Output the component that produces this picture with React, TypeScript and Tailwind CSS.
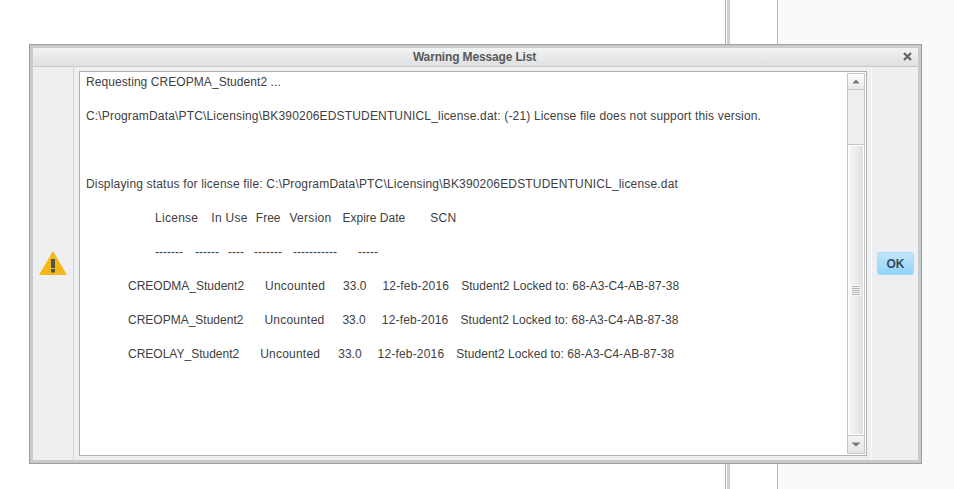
const font = { fontFamily: '"Liberation Sans", Arial, sans-serif' };

type Cell = [string, number, string?];

function Row({ cells }: { cells: Cell[] }) {
  return (
    <div className="flex h-[34px] whitespace-pre">
      {cells.map(([t, x, c], i) => (
        <span key={i} className={"shrink-0 " + (c ?? "")} style={{ marginLeft: x }}>
          {t}
        </span>
      ))}
    </div>
  );
}

function Warning() {
  return (
    <svg width="28" height="24" viewBox="0 0 28 24">
      <path d="M14 0 L28 24 L0 24 Z" fill="#f4b916" />
      <rect x="12" y="8" width="4" height="9" fill="#555048" />
      <rect x="12" y="18" width="4" height="3.5" fill="#555048" />
    </svg>
  );
}

function Scrollbar() {
  return (
    <div className="w-[18px] shrink-0 mr-px my-px flex flex-col border border-[#c4c6c8] bg-[#eceef0]">
      <div className="h-[16px] shrink-0 flex items-center justify-center border-b border-[#c4c6c8] bg-gradient-to-b from-[#fbfbfb] to-[#e8e9ea]">
        <svg width="8" height="5" viewBox="0 0 8 5"><path d="M4 0.5 L7.5 4.5 L0.5 4.5 Z" fill="#777" /></svg>
      </div>
      <div className="h-[54px] shrink-0" />
      <div className="flex-1 border-y border-[#c4c6c8] border-x-0 p-px bg-white">
        <div className="h-full flex items-center justify-center bg-gradient-to-r from-[#f8f8f8] to-[#e0e0e1]">
          <div className="flex flex-col gap-px w-[10px] px-px py-px bg-[#f4f4f4]">
            {[0, 1, 2, 3, 4].map((i) => (
              <div key={i} className="h-px bg-[#b4b6b8]" />
            ))}
          </div>
        </div>
      </div>
      <div className="h-[17px] shrink-0 flex items-center justify-center bg-gradient-to-b from-[#f4f4f5] to-[#e4e5e6]">
        <svg width="10" height="5" viewBox="0 0 10 5"><path d="M0.5 0.5 L9.5 0.5 L5 4.5 Z" fill="#777" /></svg>
      </div>
    </div>
  );
}

const HEAD: Cell[] = [
  ["License", 69, "tracking-[0.28px]"],
  ["In Use", 13, "tracking-[0.3px]"],
  ["Free", 8],
  ["Version", 9, "tracking-[0.28px]"],
  ["Expire Date", 11],
  ["SCN", 25, "tracking-[0.3px]"],
];

const DASH: Cell[] = [
  ["-------", 69],
  ["------", 12],
  ["----", 9],
  ["-------", 10],
  ["-----------", 11],
  ["-----", 21],
];

function lic(name: string): Cell[] {
  return [
    [name, 42],
    ["Uncounted", 21, "tracking-[0.22px]"],
    ["33.0", 18],
    ["12-feb-2016", 16, "tracking-[0.18px]"],
    ["Student2 Locked to: 68-A3-C4-AB-87-38", 12, "tracking-[0.05px]"],
  ];
}

export default function App() {
  return (
    <div className="relative w-[954px] h-[489px] overflow-hidden bg-white" style={font}>
      <div className="flex h-full">
        <div className="w-[725px] shrink-0" />
        <div className="w-px shrink-0 bg-[#b0b0b0]" />
        <div className="w-px shrink-0" />
        <div className="w-[3px] shrink-0 bg-[#cfd0d1]" />
        <div className="w-[47px] shrink-0" />
        <div className="w-px shrink-0 bg-[#b4b4b4]" />
        <div className="flex-1 bg-[#fafafa]" />
      </div>

      <div className="absolute left-[29px] top-[44px] w-[893px] h-[420px] border border-[#9c9e9f] bg-[#c8cacc] p-[3px] flex flex-col">
        <div className="h-[19px] shrink-0 border-b border-[#c8cacc] bg-gradient-to-b from-[#f2f3f3] to-[#dfe0e2] flex items-center relative">
          <div className="flex-1 pr-[2px] text-center text-[12px] font-bold text-[#5a5a5a] tracking-[-0.15px]">Warning Message List</div>
          <svg className="absolute right-[6px] top-[4px]" width="9" height="9" viewBox="0 0 9 9">
            <path d="M1 1 L8 8 M8 1 L1 8" stroke="#666" strokeWidth="2.4" />
          </svg>
        </div>
        <div className="flex flex-1 min-h-0 bg-[#eeeff1]">
          <div className="w-[40px] shrink-0 flex items-center justify-center pb-px border-r border-[#d5d6d8] box-content">
            <Warning />
          </div>
          <div className="flex-1 min-w-0 flex flex-col pl-[5px] pr-[4px] py-[4px] bg-[#eeeff1]">
            <div className="flex-1 min-h-0 flex border border-[#aeb0b2] bg-white">
              <div className="flex-1 min-w-0 pl-[6px] pt-[2px] text-[12px] leading-[17px] text-[#404040]">
                <Row cells={[["Requesting CREOPMA_Student2 ...", 0, "tracking-[0.065px]"]]} />
                <Row cells={[["C:\\ProgramData\\PTC\\Licensing\\BK390206EDSTUDENTUNICL_license.dat: (-21) License file does not support this version.", 0, "tracking-[0.165px]"]]} />
                <div className="h-[34px]" />
                <Row cells={[["Displaying status for license file: C:\\ProgramData\\PTC\\Licensing\\BK390206EDSTUDENTUNICL_license.dat", 0, "tracking-[0.173px]"]]} />
                <Row cells={HEAD} />
                <Row cells={DASH} />
                <Row cells={lic("CREODMA_Student2")} />
                <Row cells={lic("CREOPMA_Student2")} />
                <Row cells={lic("CREOLAY_Student2")} />
              </div>
              <Scrollbar />
            </div>
          </div>
          <div className="w-[47px] shrink-0 border-l border-[#fafafa] pl-px flex items-center justify-center">
            <button className="w-[37px] h-[23px] rounded-[3px] border border-[#a6d8f7] bg-gradient-to-b from-[#c2e6fc] to-[#92d3fb] text-[12px] font-bold text-[#3a4a58]">
              OK
            </button>
          </div>
        </div>
      </div>
    </div>
  );
}
